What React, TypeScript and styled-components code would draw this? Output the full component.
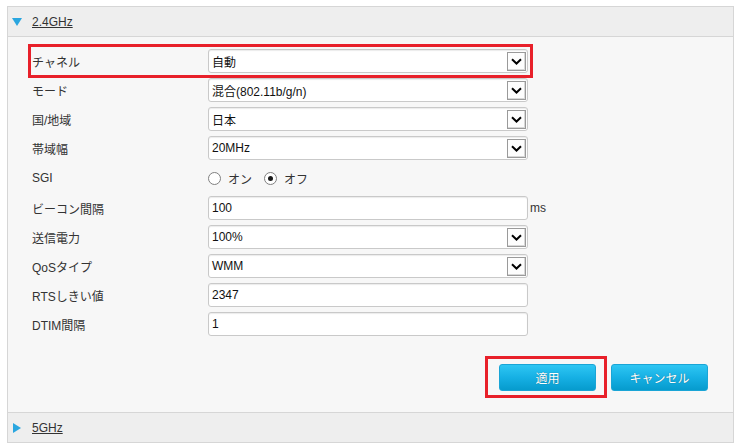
import React from 'react'
import styled, { createGlobalStyle, css } from 'styled-components'

const GlobalStyle = createGlobalStyle`
  html, body {
    margin: 0;
    padding: 0;
    background: #fff;
  }

  body {
    font-family: 'Liberation Sans', 'Noto Sans CJK JP', sans-serif;
    font-size: 12px;
    color: #333;
  }
`

const Page = styled.div`
  padding: 6px 0 0 7px;
`

const Panel = styled.section`
  width: 727px;
  box-sizing: border-box;
  border: 1px solid #d6d6d6;
  border-bottom: none;
  background: #f7f7f7;
`

const Header = styled.div`
  display: flex;
  align-items: center;
  height: 29px;
  padding-left: 4px;
  background: #eeeeee;
  border-bottom: 1px solid #d6d6d6;
`

const Caret = styled.span<{ $open?: boolean }>`
  width: 0;
  height: 0;
  ${props =>
    props.$open
      ? css`
          margin-right: 10px;
          border-left: 5px solid transparent;
          border-right: 5px solid transparent;
          border-top: 8px solid #2aa6df;
        `
      : css`
          margin-left: 1px;
          margin-right: 11px;
          border-top: 5px solid transparent;
          border-bottom: 5px solid transparent;
          border-left: 8px solid #2aa6df;
        `}
`

const HeaderLink = styled.a`
  color: #333;
  text-decoration: underline;
  font-size: 12px;
`

const Body = styled.div`
  padding: 12px 25px 21px 24px;
  border-bottom: 1px solid #d6d6d6;
`

const Rows = styled.div`
  display: flex;
  flex-direction: column;
  gap: 5px;
`

const Row = styled.div<{ $height?: number; $marked?: boolean }>`
  position: relative;
  display: grid;
  grid-template-columns: 176px 320px 0;
  align-items: center;
  width: 496px;
  height: ${props => props.$height || 24}px;

  ${props =>
    props.$marked &&
    css`
      &::after {
        content: '';
        position: absolute;
        top: -5px;
        bottom: -5px;
        left: -4px;
        right: -5px;
        border: 3px solid #e8202a;
        pointer-events: none;
      }
    `}
`

const Label = styled.span`
  color: #333;
`

const Field = styled.div`
  display: flex;
  align-items: center;
  height: 24px;
  box-sizing: border-box;
  padding-left: 3px;
  background: #fff;
  border: 1px solid #c9c9c9;
  border-radius: 3px;
  box-shadow: inset 0 1px 1px rgba(0, 0, 0, 0.08);
  color: #111;
`

const FieldText = styled.span`
  flex: 1;
`

const ArrowBox = styled.span`
  display: flex;
  align-items: center;
  justify-content: center;
  width: 17px;
  height: 17px;
  margin-right: 1px;
  background: #fdfdfd;
  border: 1px solid #9a9a9a;
  box-shadow: inset -1px -1px 0 #d8d8d8;
`

const Unit = styled.span`
  padding-left: 2px;
  white-space: nowrap;
  color: #333;
`

const Radios = styled.div`
  display: flex;
  align-items: center;
  gap: 12px;
`

const RadioItem = styled.label`
  display: flex;
  align-items: center;
  gap: 7px;
`

const RadioDot = styled.span<{ $checked?: boolean }>`
  display: flex;
  align-items: center;
  justify-content: center;
  width: 11px;
  height: 11px;
  border: 1px solid #808080;
  border-radius: 50%;
  background: #fff;

  &::after {
    content: '';
    width: 5px;
    height: 5px;
    border-radius: 50%;
    background: ${props => (props.$checked ? '#1a1a1a' : 'transparent')};
  }
`

const Actions = styled.div`
  display: flex;
  justify-content: flex-end;
  gap: 15px;
  margin-top: 28px;
`

const Button = styled.button<{ $marked?: boolean }>`
  position: relative;
  width: 97px;
  height: 27px;
  border: 1px solid #1aa5d6;
  border-radius: 3px;
  background: linear-gradient(to bottom, #2ec6f3 0%, #16b0e4 50%, #069bcd 100%);
  color: #fff;
  font-family: 'Liberation Sans', 'Noto Sans CJK JP', sans-serif;
  font-size: 12px;
  text-shadow: 0 0 1px rgba(0, 0, 0, 0.45);
  cursor: pointer;

  ${props =>
    props.$marked &&
    css`
      &::after {
        content: '';
        position: absolute;
        top: -9px;
        bottom: -8px;
        left: -15px;
        right: -12px;
        border: 3px solid #e8202a;
        pointer-events: none;
      }
    `}
`

const Chevron = () => (
  <svg width='11' height='7' viewBox='0 0 11 7'>
    <path d='M1 1.2 L5.5 5.5 L10 1.2' fill='none' stroke='#000' strokeWidth='2' />
  </svg>
)

interface ValueProps {
  value: string
}

const Select: React.FC<ValueProps> = ({ value }) => (
  <Field>
    <FieldText>{value}</FieldText>
    <ArrowBox>
      <Chevron />
    </ArrowBox>
  </Field>
)

const Text: React.FC<ValueProps> = ({ value }) => (
  <Field>
    <FieldText>{value}</FieldText>
  </Field>
)

const App: React.FC = () => {
  return (
    <Page>
      <GlobalStyle />
      <Panel>
        <Header>
          <Caret $open />
          <HeaderLink>2.4GHz</HeaderLink>
        </Header>

        <Body>
          <Rows>
            <Row $marked>
              <Label>チャネル</Label>
              <Select value='自動' />
            </Row>
            <Row>
              <Label>モード</Label>
              <Select value='混合(802.11b/g/n)' />
            </Row>
            <Row>
              <Label>国/地域</Label>
              <Select value='日本' />
            </Row>
            <Row>
              <Label>帯域幅</Label>
              <Select value='20MHz' />
            </Row>
            <Row $height={26}>
              <Label>SGI</Label>
              <Radios>
                <RadioItem>
                  <RadioDot />
                  オン
                </RadioItem>
                <RadioItem>
                  <RadioDot $checked />
                  オフ
                </RadioItem>
              </Radios>
            </Row>
            <Row>
              <Label>ビーコン間隔</Label>
              <Text value='100' />
              <Unit>ms</Unit>
            </Row>
            <Row>
              <Label>送信電力</Label>
              <Select value='100%' />
            </Row>
            <Row>
              <Label>QoSタイプ</Label>
              <Select value='WMM' />
            </Row>
            <Row>
              <Label>RTSしきい値</Label>
              <Text value='2347' />
            </Row>
            <Row>
              <Label>DTIM間隔</Label>
              <Text value='1' />
            </Row>
          </Rows>

          <Actions>
            <Button type='button' $marked>
              適用
            </Button>
            <Button type='button'>キャンセル</Button>
          </Actions>
        </Body>

        <Header>
          <Caret />
          <HeaderLink>5GHz</HeaderLink>
        </Header>
      </Panel>
    </Page>
  )
}

export default App
